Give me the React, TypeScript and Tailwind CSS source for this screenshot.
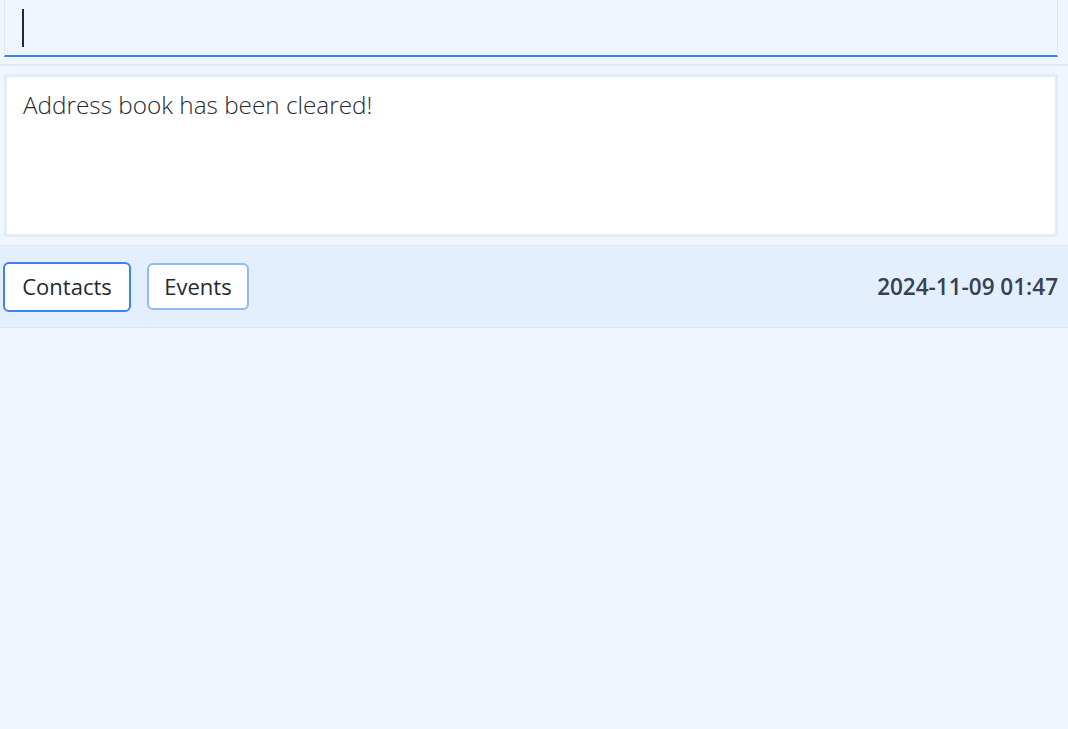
import React from "react";

const App: React.FC = () => {
  return (
    <div className="min-h-screen bg-[#eff6ff] font-['Open_Sans',sans-serif] text-[#1f2937]">
      {/* Command box */}
      <div className="ml-[4px] w-[1054px] h-[57px] border-x border-[#e2e8f0] border-b-2 border-b-[#3b82f6] flex items-center pl-[17px]">
        <div className="w-[2px] h-[38px] bg-[#1f2937]" />
      </div>

      <div className="mt-[7px] h-[2px] bg-[#e2e8f0]" />

      {/* Result display */}
      <div className="mt-[8px] ml-[4px] w-[1054px] h-[163px] border-[3px] border-[#e4edf7] bg-white px-[16px] pt-[12px]">
        <p className="text-[24.3px] font-light leading-[32px]">Address book has been cleared!</p>
      </div>

      {/* Status bar */}
      <div className="mt-[8px] h-[83px] border-y border-[#dbe6f2] bg-[#e3effd] flex items-center justify-between pl-[3px] pr-[10px]">
        <div className="flex items-center gap-[16px]">
          <button className="h-[50px] w-[128px] rounded-[6px] border-[2.5px] border-[#3b82f6] bg-white text-[22px] text-[#1f2937]">
            Contacts
          </button>
          <button className="h-[47px] w-[102px] rounded-[6px] border-2 border-[#8bbbf9] bg-white text-[22px] text-[#1f2937]">
            Events
          </button>
        </div>
        <span className="text-[22.5px] font-semibold text-[#374151]">2024-11-09 01:47</span>
      </div>
    </div>
  );
};

export default App;
